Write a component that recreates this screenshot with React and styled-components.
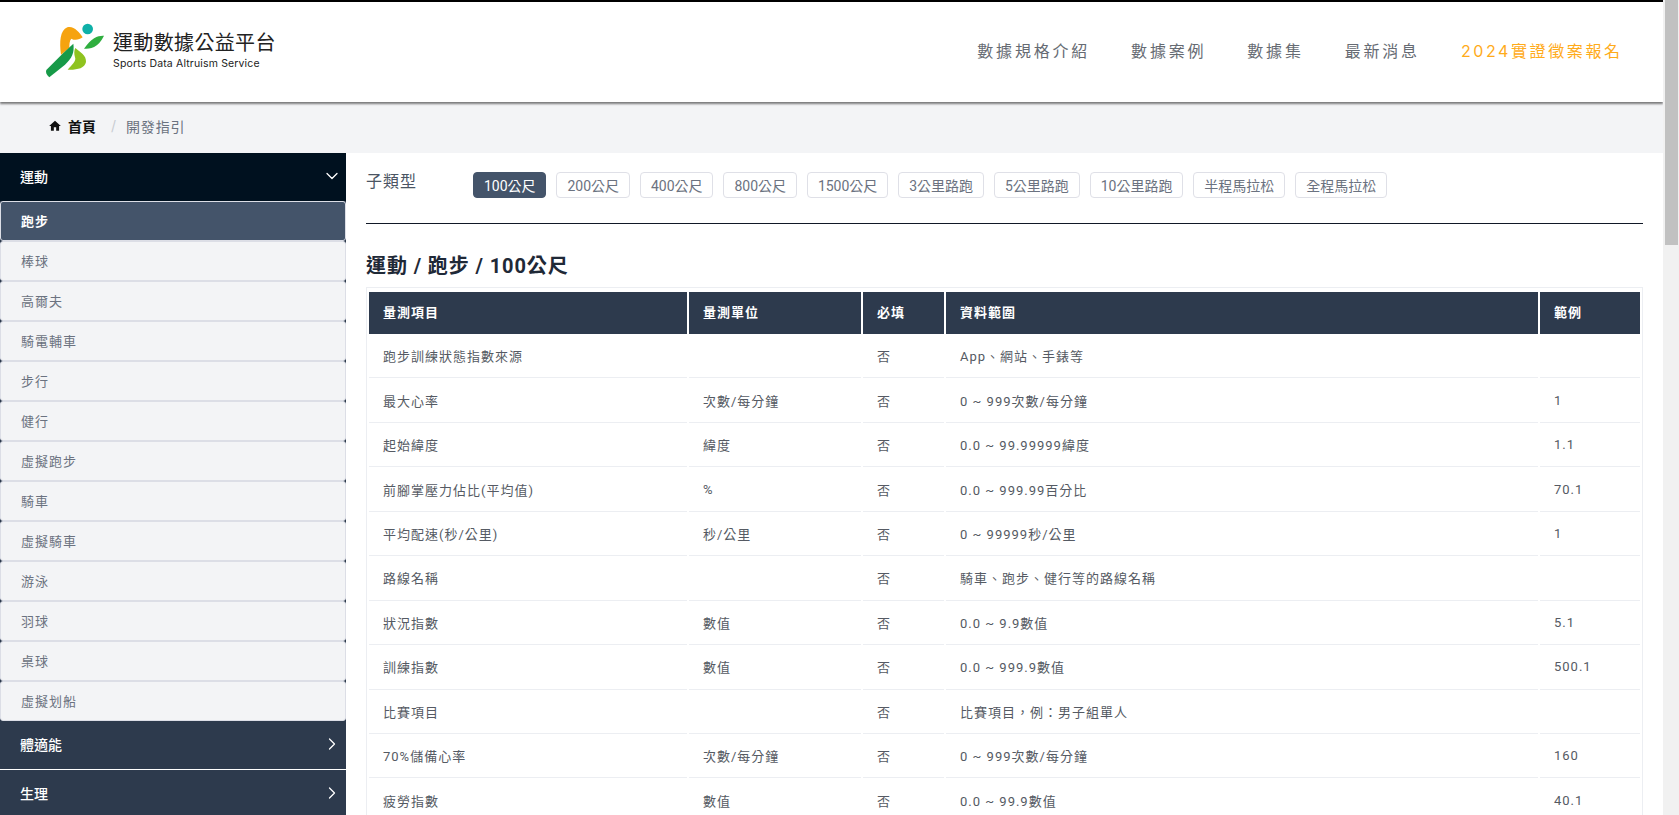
import React from "react";
import styled, { createGlobalStyle } from "styled-components";
import { ChevronDown, ChevronRight } from "lucide-react";

const Global = createGlobalStyle`
  html, body { height: 100%; overflow: hidden; }
  body { margin: 0; font-family: Inter, "Noto Sans CJK TC", sans-serif; background: #fff; }
  * { box-sizing: border-box; }
`;

const Frame = styled.div`
  display: flex;
  height: 100vh;
`;
const Viewport = styled.div`
  flex: 1;
  min-width: 0;
  overflow-y: auto;
`;
const ScrollRail = styled.div`
  width: 16px;
  flex: none;
  padding: 0 1px 0 2px;
  background: #f1f1f1;
`;
const ScrollThumb = styled.div`
  height: 245px;
  background: #c1c1c1;
`;
const Page = styled.div`
  display: flex;
  flex-direction: column;
`;
const Header = styled.header`
  position: relative;
  z-index: 2;
  height: 102px;
  border-top: 2px solid #000;
  background: #fff;
  box-shadow: 0 2px 2px rgba(0, 0, 0, 0.5);
  display: flex;
  align-items: center;
  justify-content: space-between;
  padding: 0 40.4px 0 45px;
`;
const Brand = styled.div`
  display: flex;
  align-items: center;
  gap: 8px;
  margin-bottom: 4px;
`;
const BrandText = styled.div`
  display: flex;
  flex-direction: column;
  gap: 1px;
  color: #222;
`;
const BrandTitle = styled.div`
  font-size: 20px;
  line-height: 26px;
  letter-spacing: 0.35px;
`;
const BrandSub = styled.div`
  font-size: 10.5px;
  line-height: 14px;
  letter-spacing: 0.15px;
`;
const Nav = styled.nav`
  display: flex;
  gap: 41px;
  margin-bottom: 4px;
`;
const NavLink = styled.a`
  font-size: 16px;
  letter-spacing: ${(p) => (p.$accent ? 2.6 : 2.8)}px;
  color: ${(p) => (p.$accent ? "#ffab1a" : "#666b73")};
`;
const Breadcrumb = styled.div`
  height: 51px;
  background: #f3f4f6;
  display: flex;
  align-items: center;
  padding: 0 0 4px 48px;
  font-size: 14px;
`;
const HomeLink = styled.a`
  display: flex;
  align-items: center;
  gap: 6px;
  font-weight: 700;
  color: #111;
`;
const Slash = styled.span`
  margin: 0 10px 0 15px;
  color: #c8ccd2;
`;
const Crumb = styled.span`
  color: #6b7280;
  letter-spacing: 0.8px;
`;
const Body = styled.div`
  display: flex;
`;
const Sidebar = styled.aside`
  width: 346px;
  flex: none;
  background: #2d3a4d;
`;
const GroupHead = styled.div`
  height: ${(p) => (p.$line ? 49 : 48)}px;
  display: flex;
  align-items: center;
  justify-content: space-between;
  padding: 0 4px 3px 20px;
  color: #fff;
  font-size: 14px;
  font-weight: 500;
  background: ${(p) => (p.$open ? "#00111f" : "#2d3a4d")};
  border-bottom: ${(p) => (p.$line ? "1px solid #fff" : "none")};
`;
const SideItem = styled.div`
  height: 40px;
  display: flex;
  align-items: center;
  padding: 0 0 1px 20px;
  font-size: 13px;
  letter-spacing: 1px;
  font-weight: ${(p) => (p.$active ? 700 : 400)};
  color: ${(p) => (p.$active ? "#fff" : "#6b7280")};
  background: ${(p) => (p.$active ? "#44546a" : "#f3f4f6")};
  border: 1px solid #dcdee6;
  border-radius: 3px;
`;
const Content = styled.main`
  flex: 1;
  min-width: 0;
  padding: 19px 20px 0;
`;
const FilterRow = styled.div`
  display: flex;
  align-items: flex-start;
  padding-bottom: 25px;
  border-bottom: 1px solid #111827;
`;
const FilterLabel = styled.div`
  width: 107px;
  flex: none;
  font-size: 16px;
  line-height: 18px;
  letter-spacing: 1px;
  color: #4b5563;
`;
const Chips = styled.div`
  display: flex;
  gap: 10px;
`;
const Chip = styled.button`
  height: 26px;
  padding: 0 9.95px;
  border: 1px solid ${(p) => (p.$active ? "#44546a" : "#dfe0e7")};
  border-radius: 4px;
  background: ${(p) => (p.$active ? "#44546a" : "#fff")};
  color: ${(p) => (p.$active ? "#fff" : "#6b7280")};
  font: 400 14px Roboto, "Noto Sans CJK TC", sans-serif;
`;
const Title = styled.h2`
  margin: 28px 0 7px;
  font-family: Roboto, "Noto Sans CJK TC", sans-serif;
  font-size: 20px;
  line-height: 28px;
  font-weight: 700;
  letter-spacing: 0.9px;
  color: #1f2937;
`;
const TableWrap = styled.div`
  border: 1px solid #eceef2;
  border-bottom: none;
  padding-top: 2px;
`;
const Table = styled.table`
  width: 100%;
  table-layout: fixed;
  border-collapse: separate;
  border-spacing: 2px;
  font-family: Roboto, "Noto Sans CJK TC", sans-serif;
  font-size: 13px;
  letter-spacing: 1px;
`;
const Th = styled.th`
  height: 42px;
  padding: 0 14px 3px;
  text-align: left;
  font-weight: 700;
  color: #fff;
  background: #2d3a4d;
`;
const Td = styled.td`
  height: 42.45px;
  padding: 0 14px 2px;
  color: #555a63;
  border-bottom: 1px solid #eceef2;
`;

const Logo = () => (
  <svg width="60" height="55" viewBox="45 35 180 165" aria-hidden="true">
    <circle cx="173" cy="53" r="16" fill="#0fb0a8" />
    <path d="M93 130 C88 90 90 58 112 48 C130 42 148 62 158 78 C148 86 134 88 124 82 C118 88 118 100 118 110 Z" fill="#f6a30f" />
    <path d="M222 73 C205 72 185 78 162 112 C180 112 205 110 222 73 Z" fill="#2fae3f" />
    <path d="M130 97 C134 125 125 140 105 160 L58 198 C50 192 46 182 49 176 L100 125 Z" fill="#179a48" />
    <path d="M136 110 C150 122 170 132 168 152 C164 172 140 176 113 175 C124 162 140 150 135 138 C132 128 132 118 136 110 Z" fill="#8fc31f" />
  </svg>
);

const HomeIcon = () => (
  <svg width="14" height="14" viewBox="0 0 24 24" fill="#111" aria-hidden="true">
    <path d="M10 20v-6h4v6h5v-8h3L12 3 2 12h3v8z" />
  </svg>
);

const navs = ["數據規格介紹", "數據案例", "數據集", "最新消息"];
const sports = ["跑步", "棒球", "高爾夫", "騎電輔車", "步行", "健行", "虛擬跑步", "騎車", "虛擬騎車", "游泳", "羽球", "桌球", "虛擬划船"];
const chips = ["100公尺", "200公尺", "400公尺", "800公尺", "1500公尺", "3公里路跑", "5公里路跑", "10公里路跑", "半程馬拉松", "全程馬拉松"];
const columns = [
  ["量測項目", 318],
  ["量測單位", 172],
  ["必填", 81],
  ["資料範圍", 592],
  ["範例", 100],
];
const rows = [
  ["跑步訓練狀態指數來源", "", "否", "App、網站、手錶等", ""],
  ["最大心率", "次數/每分鐘", "否", "0 ~ 999次數/每分鐘", "1"],
  ["起始緯度", "緯度", "否", "0.0 ~ 99.99999緯度", "1.1"],
  ["前腳掌壓力佔比(平均值)", "%", "否", "0.0 ~ 999.99百分比", "70.1"],
  ["平均配速(秒/公里)", "秒/公里", "否", "0 ~ 99999秒/公里", "1"],
  ["路線名稱", "", "否", "騎車、跑步、健行等的路線名稱", ""],
  ["狀況指數", "數值", "否", "0.0 ~ 9.9數值", "5.1"],
  ["訓練指數", "數值", "否", "0.0 ~ 999.9數值", "500.1"],
  ["比賽項目", "", "否", "比賽項目，例：男子組單人", ""],
  ["70%儲備心率", "次數/每分鐘", "否", "0 ~ 999次數/每分鐘", "160"],
  ["疲勞指數", "數值", "否", "0.0 ~ 99.9數值", "40.1"],
];

export default function App() {
  return (
    <Frame>
      <Global />
      <Viewport>
        <Page>
          <Header>
            <Brand>
              <Logo />
              <BrandText>
                <BrandTitle>運動數據公益平台</BrandTitle>
                <BrandSub>Sports Data Altruism Service</BrandSub>
              </BrandText>
            </Brand>
            <Nav>
              {navs.map((n) => (
                <NavLink key={n}>{n}</NavLink>
              ))}
              <NavLink $accent>2024實證徵案報名</NavLink>
            </Nav>
          </Header>
          <Breadcrumb>
            <HomeLink>
              <HomeIcon />
              首頁
            </HomeLink>
            <Slash>/</Slash>
            <Crumb>開發指引</Crumb>
          </Breadcrumb>
          <Body>
            <Sidebar>
              <GroupHead $open>
                運動
                <ChevronDown size={20} strokeWidth={1.5} />
              </GroupHead>
              {sports.map((s, i) => (
                <SideItem key={s} $active={i === 0}>
                  {s}
                </SideItem>
              ))}
              <GroupHead $line>
                體適能
                <ChevronRight size={20} strokeWidth={1.5} />
              </GroupHead>
              <GroupHead>
                生理
                <ChevronRight size={20} strokeWidth={1.5} />
              </GroupHead>
            </Sidebar>
            <Content>
              <FilterRow>
                <FilterLabel>子類型</FilterLabel>
                <Chips>
                  {chips.map((c, i) => (
                    <Chip key={c} $active={i === 0}>
                      {c}
                    </Chip>
                  ))}
                </Chips>
              </FilterRow>
              <Title>運動 / 跑步 / 100公尺</Title>
              <TableWrap>
                <Table>
                  <colgroup>
                    {columns.map(([n, w]) => (
                      <col key={n} style={{ width: w }} />
                    ))}
                  </colgroup>
                  <thead>
                    <tr>
                      {columns.map(([n]) => (
                        <Th key={n}>{n}</Th>
                      ))}
                    </tr>
                  </thead>
                  <tbody>
                    {rows.map((r) => (
                      <tr key={r[0]}>
                        {r.map((c, i) => (
                          <Td key={i}>{c}</Td>
                        ))}
                      </tr>
                    ))}
                  </tbody>
                </Table>
              </TableWrap>
            </Content>
          </Body>
        </Page>
      </Viewport>
      <ScrollRail>
        <ScrollThumb />
      </ScrollRail>
    </Frame>
  );
}
